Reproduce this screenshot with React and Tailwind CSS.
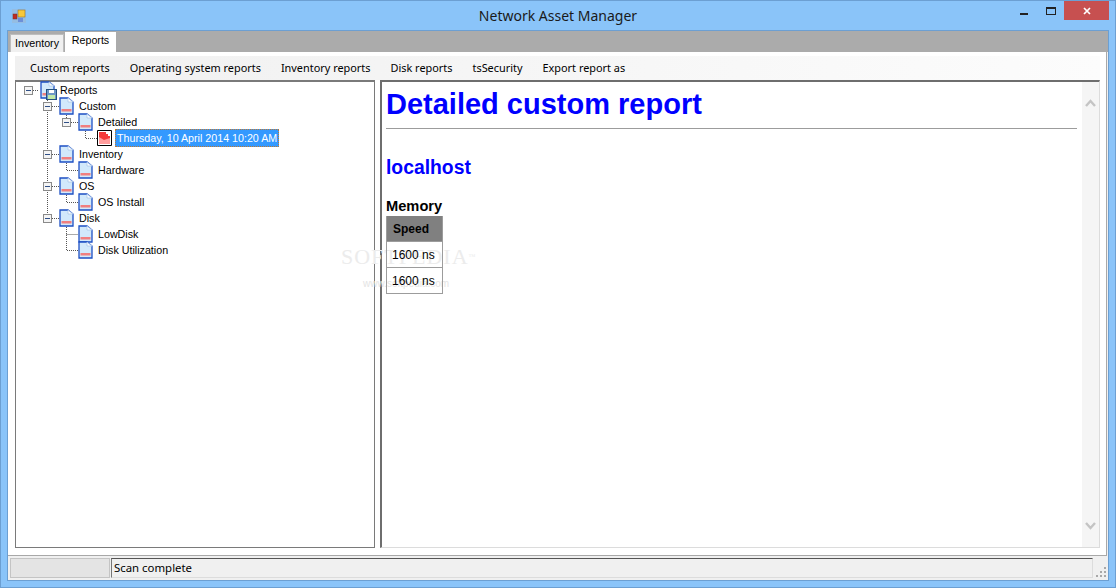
import React from "react";

const indent = ["pl-[8px]", "pl-[27px]", "pl-[46px]", "pl-[65px]"];

const rows = [
  { level: 0, text: "Reports", open: true, icon: "root" },
  { level: 1, text: "Custom", open: true },
  { level: 2, text: "Detailed", open: true },
  { level: 3, text: "Thursday, 10 April 2014 10:20 AM", icon: "red", selected: true },
  { level: 1, text: "Inventory", open: true },
  { level: 2, text: "Hardware" },
  { level: 1, text: "OS", open: true },
  { level: 2, text: "OS Install" },
  { level: 1, text: "Disk", open: true },
  { level: 2, text: "LowDisk" },
  { level: 2, text: "Disk Utilization" },
];

const menu = [
  "Custom reports",
  "Operating system reports",
  "Inventory reports",
  "Disk reports",
  "tsSecurity",
  "Export report as",
];

function DocIcon() {
  return (
    <svg width="16" height="18" viewBox="0 0 16 18" className="-my-px shrink-0">
      <path d="M1 1h8l5 4v12H1z" fill="#d2e9fb" stroke="#1c4fc4" strokeWidth="1.3" />
      <path d="M9 1v4h5z" fill="#fff" stroke="#a9c6ea" strokeWidth=".8" />
      <rect x="2.5" y="12" width="10" height="2.5" fill="#f07f7f" />
    </svg>
  );
}

function RedDocIcon() {
  return (
    <svg width="16" height="16" viewBox="0 0 16 16" className="shrink-0">
      <path d="M.5 .5h14v15H.5z" fill="#fff" stroke="#000" />
      <path d="M2 2h7v2h2v2h2v8H2z" fill="#ff9c9c" />
      <path d="M2 2h7v2h2v2h2v2L7 10 2 7z" fill="#f53a3a" />
    </svg>
  );
}

function RootIcon() {
  return (
    <div className="relative h-4 w-4 shrink-0">
      <DocIcon />
      <svg width="11" height="11" viewBox="0 0 11 11" className="absolute -bottom-[2px] -right-[1px]">
        <rect x=".5" y=".5" width="10" height="10" fill="#6d97c6" stroke="#24507f" />
        <rect x="3" y="1" width="5" height="3" fill="#fff" />
        <rect x="2" y="6" width="7" height="4" fill="#bfe8a8" />
      </svg>
    </div>
  );
}

function ExpandBox() {
  return (
    <div className="flex h-[9px] w-[9px] items-center justify-center border border-[#8a8a8a] bg-[#f4f4f4]">
      <div className="h-px w-[5px] bg-[#2f4f86]" />
    </div>
  );
}

function TreeRow({ level, text, open, icon, selected }) {
  return (
    <div className={`flex h-4 items-center ${indent[level]}`}>
      <div className="w-4 shrink-0">{open && <ExpandBox />}</div>
      {icon === "root" ? <RootIcon /> : icon === "red" ? <RedDocIcon /> : <DocIcon />}
      {selected ? (
        <span className="ml-[2px] whitespace-nowrap border border-dotted border-[#c07830] bg-[#3399ff] px-[1px] text-white">
          {text}
        </span>
      ) : (
        <span className="ml-1 whitespace-nowrap">{text}</span>
      )}
    </div>
  );
}

// dotted tree connectors, in page coordinates
function TreeLines() {
  const d =
    "M47.5 96V218M33 90.5H39M52 106.5H59M52 154.5H59M52 186.5H59M52 218.5H59" +
    "M66.5 113V123M71 122.5H78M66.5 161V170.5H78M66.5 193V202.5H78M66.5 225V250.5H78M66.5 234.5H78" +
    "M85.5 129V138.5H97";
  return (
    <svg
      width="358"
      height="465"
      viewBox="16 82 358 465"
      className="absolute left-0 top-0"
    >
      <path d={d} stroke="#555" strokeDasharray="1 1" fill="none" />
    </svg>
  );
}

function ReportCell({ children }) {
  return (
    <div className="flex h-[26px] items-center border-t border-[#9c9c9c] pl-[5px] first:border-t-0">
      {children}
    </div>
  );
}

function ScrollChevron({ down }) {
  return (
    <svg width="11" height="8" viewBox="0 0 11 8" className={down ? "rotate-180" : ""}>
      <path d="M1 7l4.5-5L10 7" fill="none" stroke="#c4c4c4" strokeWidth="2.4" />
    </svg>
  );
}

export default function App() {
  return (
    <div className="relative flex h-[588px] w-[1116px] flex-col overflow-hidden border border-[#6c9fd2] bg-[#8ac4f9] font-['Liberation_Sans',sans-serif] text-black">
      {/* title bar */}
      <div className="grid h-[29px] shrink-0 grid-cols-[1fr_auto_1fr]">
        <div className="flex items-center pl-[11px]">
          <svg width="14" height="14" viewBox="0 0 14 14">
            <rect width="14" height="14" fill="#9fb6cc" opacity=".5" />
            <rect x="1" y="5" width="4" height="5" fill="#c22a20" stroke="#6b3a30" strokeWidth=".5" />
            <rect x="6" y="1" width="7" height="7" fill="#f7c83a" stroke="#8a6a20" strokeWidth=".5" />
            <rect x="6" y="9" width="5" height="4" fill="#6c8fd8" />
          </svg>
        </div>
        <div className="flex items-center pb-[1px] font-['Noto_Sans',sans-serif] text-[14px] text-[#1a1a1a]">
          Network Asset Manager
        </div>
        <div className="flex items-start justify-end pr-[6px]">
          <div className="mr-[18px] mt-[12px] h-[2px] w-2 bg-[#222]" />
          <div className="mr-2 mt-[6px] h-2 w-[10px] border border-t-2 border-[#222]" />
          <div className="flex h-[19px] w-[45px] items-center justify-center bg-[#c75050]">
            <svg width="8" height="8" viewBox="0 0 8 8">
              <path d="M1 1l6 6M7 1L1 7" stroke="#fff" strokeWidth="1.7" />
            </svg>
          </div>
        </div>
      </div>

      {/* client area */}
      <div className="mx-[6px] mb-[6px] flex min-h-0 flex-1 flex-col border border-[#6c9fd2] bg-[#f0f0f0] font-['Noto_Sans',sans-serif]">
        {/* tabs */}
        <div className="flex h-[21px] shrink-0 items-end bg-[#ababab] pl-[2px] font-['Liberation_Sans',sans-serif] text-[10.7px]">
          <div className="flex h-[18px] w-[54px] items-center justify-center border border-b-0 border-[#bdbdbd] bg-[#f0f0f0]">
            Inventory
          </div>
          <div className="ml-px flex h-5 w-[51px] items-center justify-center bg-white pb-[3px]">
            Reports
          </div>
        </div>

        {/* tab page */}
        <div className="mr-[1px] flex min-h-0 flex-1 flex-col border-b border-r border-[#a8a8a8] bg-white pb-[7px] pl-[7px] pr-[6px] pt-1">
          <div className="flex h-6 shrink-0 items-center gap-5 bg-gradient-to-r from-[#f0f0f0] to-[#fcfcfc] pl-[15px] text-[10.9px]">
            {menu.map((item) => (
              <span key={item}>{item}</span>
            ))}
          </div>

          <div className="flex min-h-0 flex-1 gap-[5px] font-['Liberation_Sans',sans-serif]">
            {/* tree panel */}
            <div className="relative w-[360px] shrink-0 border border-t-2 border-[#7a7a7a] bg-white text-[10.7px]">
              <TreeLines />
              <div className="relative">
                {rows.map((row) => (
                  <TreeRow key={row.text} {...row} />
                ))}
              </div>
            </div>

            {/* report panel */}
            <div className="relative flex min-w-0 flex-1 border-b border-l-2 border-r border-t-2 border-b-[#dcdcdc] border-l-[#6e6e6e] border-r-[#dcdcdc] border-t-[#6e6e6e] bg-white">
              <div className="min-w-0 flex-1 pl-1 pr-[5px]">
                <h1 className="mt-1 text-[29px] font-bold leading-[37px] text-[#0000ff]">
                  Detailed custom report
                </h1>
                <div className="mt-[5px] h-px bg-[#9c9c9c]" />
                <h2 className="mt-[27px] text-[19.33px] font-bold leading-[23px] text-[#0000ff]">
                  localhost
                </h2>
                <h3 className="mt-[18px] text-[14.67px] font-bold leading-[18px]">Memory</h3>
                <div className="relative z-10 mt-px w-[57px] border-x border-b border-[#9c9c9c] text-[12px]">
                  <div className="flex h-[25px] items-center bg-[#808080] pl-[6px] font-bold">Speed</div>
                  <ReportCell>1600 ns</ReportCell>
                  <ReportCell>1600 ns</ReportCell>
                </div>
              </div>
              <div className="flex w-[17px] shrink-0 flex-col items-center justify-between bg-[#f5f5f5] py-[17px]">
                <ScrollChevron />
                <ScrollChevron down />
              </div>
            </div>
          </div>
        </div>

        {/* status bar */}
        <div className="flex h-[24px] shrink-0 items-stretch bg-[#f0f0f0] pb-[2px] pl-[2px] pt-[2px] text-[11.4px]">
          <div className="w-[100px] border border-[#c4c4c4] bg-[#e4e4e4]" />
          <div className="ml-px flex flex-1 items-center border-b border-l border-r border-t border-b-[#dcdcdc] border-l-[#777] border-r-[#dcdcdc] border-t-[#555] pl-[2px]">
            Scan complete
          </div>
          <svg width="15" height="20" viewBox="0 0 15 20" className="shrink-0">
            <path d="M11 9h2v2h-2zM7 13h2v2H7zM11 13h2v2h-2zM3 17h2v2H3zM7 17h2v2H7zM11 17h2v2h-2z" fill="#a8a8a8" />
          </svg>
        </div>
      </div>

      {/* watermark */}
      <div className="pointer-events-none absolute left-[340px] top-[243px] font-['Liberation_Serif',serif] text-[22px] leading-[26px] tracking-[1px] text-[#ececec]">
        SOFTPEDIA
        <span className="align-top text-[7px]">™</span>
      </div>
      <div className="pointer-events-none absolute left-[362px] top-[275px] text-[10px] text-[#e4e4e4]">
        www.softpedia.com
      </div>
    </div>
  );
}
